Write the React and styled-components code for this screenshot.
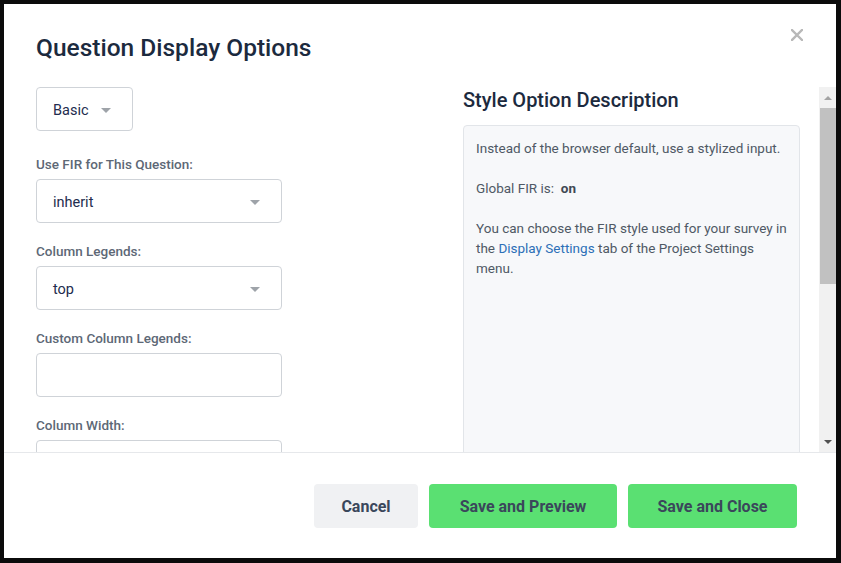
import React from "react";
import styled, { createGlobalStyle } from "styled-components";

const Global = createGlobalStyle`
  html, body { margin: 0; padding: 0; background: #0b0b0b; }
  body { font-family: Roboto, "Noto Sans", "Liberation Sans", sans-serif; }
  * { box-sizing: border-box; }
`;

const Frame = styled.div`
  width: 841px;
  height: 563px;
  padding: 4px 5px 5px 4px;
  background: #0b0b0b;
`;

const Modal = styled.div`
  width: 832px;
  height: 554px;
  background: #fff;
  display: flex;
  flex-direction: column;
  overflow: hidden;
`;

const Header = styled.div`
  height: 83px;
  flex: none;
  display: flex;
  justify-content: space-between;
  align-items: flex-start;
  padding: 29px 33px 0 32px;
`;

const Title = styled.h1`
  margin: 0;
  font-size: 24.5px;
  line-height: 30px;
  font-weight: 500;
  color: #1c2a3e;
`;

const Close = styled.button`
  border: 0;
  background: none;
  padding: 0;
  margin-top: -4px;
  width: 12px;
  height: 12px;
  display: flex;
  cursor: pointer;
`;

const Body = styled.div`
  flex: 1;
  display: flex;
  min-height: 0;
`;

const Content = styled.div`
  flex: 1;
  overflow: hidden;
  display: grid;
  grid-template-columns: 427px 337px;
  padding-left: 32px;
  align-items: start;
`;

const LeftCol = styled.div`
  display: flex;
  flex-direction: column;
`;

const Field = styled.div`
  display: flex;
  flex-direction: column;
  gap: 5px;
  margin-top: ${(p) => p.$top || 18}px;
`;

const Label = styled.label`
  font-size: 13.5px;
  line-height: 20px;
  font-weight: 500;
  color: #5d6876;
`;

const SelectBox = styled.div`
  width: ${(p) => p.$w || 246}px;
  height: 44px;
  border: 1px solid #cfd3d8;
  border-radius: 4px;
  background: #fff;
  display: flex;
  align-items: center;
  justify-content: space-between;
  padding: 2px 21px 0 16px;
  font-size: 14.5px;
  color: #222c4e;
`;

const Caret = styled.span`
  width: 0;
  height: 0;
  border-left: 5px solid transparent;
  border-right: 5px solid transparent;
  border-top: 5px solid #9ea3a9;
`;

const TextInput = styled.div`
  width: 246px;
  height: 44px;
  border: 1px solid #cfd3d8;
  border-radius: 4px;
  background: #fff;
  flex: none;
`;

const RightCol = styled.div`
  display: flex;
  flex-direction: column;
`;

const SubTitle = styled.h2`
  margin: 0 0 12px;
  font-size: 20px;
  line-height: 26px;
  font-weight: 500;
  color: #1c2a3e;
`;

const DescBox = styled.div`
  height: 420px;
  background: #f7f8fa;
  border: 1px solid #e2e5e9;
  border-radius: 4px;
  padding: 12px 12px;
  font-size: 13.5px;
  line-height: 20px;
  color: #4f5965;
`;

const Para = styled.p`
  margin: 0 0 20px;
`;

const Link = styled.a`
  color: #2c6fb7;
  text-decoration: none;
`;

const Strong = styled.b`
  font-weight: 700;
  color: #3f4853;
`;

const Scrollbar = styled.div`
  width: 17px;
  flex: none;
  background: #f1f1f1;
  display: flex;
  flex-direction: column;
`;

const ScrollBtn = styled.div`
  height: 21px;
  display: flex;
  align-items: center;
  justify-content: center;
  flex: none;
`;

const Arrow = styled.span`
  width: 0;
  height: 0;
  border-left: 4px solid transparent;
  border-right: 4px solid transparent;
  ${(p) =>
    p.$up
      ? `border-bottom: 4px solid #a3a3a3;`
      : `border-top: 4px solid #505050;`}
`;

const Thumb = styled.div`
  height: 176px;
  margin-left: 1px;
  background: #c1c1c1;
  flex: none;
`;

const Spacer = styled.div`
  flex: 1;
`;

const Footer = styled.div`
  flex: none;
  border-top: 1px solid #e6e8eb;
  padding: 31px 39px 30px 32px;
  display: flex;
  justify-content: flex-end;
  gap: 11px;
`;

const Button = styled.button`
  height: 44px;
  width: ${(p) => p.$w}px;
  padding: 0;
  border: 0;
  border-radius: 4px;
  font-family: inherit;
  font-size: 16px;
  font-weight: 700;
  color: #3a475b;
  background: ${(p) => (p.$primary ? "#5ae072" : "#f0f1f3")};
  cursor: pointer;
`;

export default function App() {
  return (
    <>
      <Global />
      <Frame>
        <Modal>
          <Header>
            <Title>Question Display Options</Title>
            <Close aria-label="Close">
              <svg width="12" height="12" viewBox="0 0 12 12">
                <path d="M1 1L11 11M11 1L1 11" stroke="#b8b8b8" strokeWidth="2.4" strokeLinecap="square" />
              </svg>
            </Close>
          </Header>
          <Body>
            <Content>
              <LeftCol>
                <SelectBox $w={97}>
                  <span>Basic</span>
                  <Caret />
                </SelectBox>
                <Field $top={23}>
                  <Label>Use FIR for This Question:</Label>
                  <SelectBox>
                    <span>inherit</span>
                    <Caret />
                  </SelectBox>
                </Field>
                <Field>
                  <Label>Column Legends:</Label>
                  <SelectBox>
                    <span>top</span>
                    <Caret />
                  </SelectBox>
                </Field>
                <Field>
                  <Label>Custom Column Legends:</Label>
                  <TextInput />
                </Field>
                <Field>
                  <Label>Column Width:</Label>
                  <TextInput />
                </Field>
              </LeftCol>
              <RightCol>
                <SubTitle>Style Option Description</SubTitle>
                <DescBox>
                  <Para>Instead of the browser default, use a stylized input.</Para>
                  <Para>
                    Global FIR is:&nbsp; <Strong>on</Strong>
                  </Para>
                  <Para>
                    You can choose the FIR style used for your survey in the{" "}
                    <Link href="#">Display Settings</Link> tab of the Project Settings menu.
                  </Para>
                </DescBox>
              </RightCol>
            </Content>
            <Scrollbar>
              <ScrollBtn>
                <Arrow $up />
              </ScrollBtn>
              <Thumb />
              <Spacer />
              <ScrollBtn>
                <Arrow />
              </ScrollBtn>
            </Scrollbar>
          </Body>
          <Footer>
            <Button $w={104}>Cancel</Button>
            <Button $primary $w={188}>Save and Preview</Button>
            <Button $primary $w={169}>Save and Close</Button>
          </Footer>
        </Modal>
      </Frame>
    </>
  );
}
